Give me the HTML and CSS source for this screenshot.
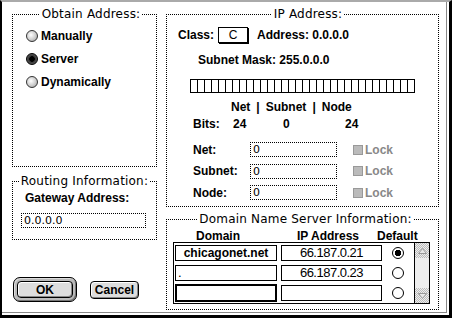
FILE: index.html
```html
<!DOCTYPE html>
<html lang="en">
<head>
    <meta charset="UTF-8">
    <title>TCP/IP</title>
    <link rel="stylesheet" href="styles.css">
</head>
<body>
    <div class="window">
        <!-- coluna esquerda -->
        <div class="col">
            <fieldset class="group obtain">
                <legend>Obtain Address:</legend>
                <div class="radio-row"><span class="radio"></span>Manually</div>
                <div class="radio-row"><span class="radio on"></span>Server</div>
                <div class="radio-row"><span class="radio"></span>Dynamically</div>
            </fieldset>
            <fieldset class="group routing">
                <legend>Routing Information:</legend>
                <div class="label gateway-label">Gateway Address:</div>
                <div class="field gateway-field">0.0.0.0</div>
            </fieldset>
            <div class="buttons">
                <div class="default-ring"><button class="btn ok">OK</button></div>
                <button class="btn cancel">Cancel</button>
            </div>
        </div>

        <!-- coluna direita -->
        <div class="col">
            <fieldset class="group ip">
                <legend>IP Address:</legend>
                <div class="class-row label">
                    <span class="class-label">Class:</span>
                    <span class="class-box">C</span>
                    <span>Address: 0.0.0.0</span>
                </div>
                <div class="label mask">Subnet Mask: 255.0.0.0</div>
                <div class="bitbar"></div>
                <div class="label split">
                    <span>Net</span><span>|</span><span>Subnet</span><span>|</span><span>Node</span>
                </div>
                <div class="label bits">
                    <span class="bits-name">Bits:</span>
                    <span class="bits-net">24</span>
                    <span class="bits-sub">0</span>
                    <span>24</span>
                </div>
                <div class="parts">
                    <div class="part-row">
                        <span class="label">Net:</span>
                        <span class="field">0</span>
                        <span class="check"></span>
                        <span class="label lock">Lock</span>
                    </div>
                    <div class="part-row">
                        <span class="label">Subnet:</span>
                        <span class="field">0</span>
                        <span class="check"></span>
                        <span class="label lock">Lock</span>
                    </div>
                    <div class="part-row">
                        <span class="label">Node:</span>
                        <span class="field">0</span>
                        <span class="check"></span>
                        <span class="label lock">Lock</span>
                    </div>
                </div>
            </fieldset>

            <fieldset class="group dns">
                <legend>Domain Name Server Information:</legend>
                <div class="label dns-head">
                    <span class="head-domain">Domain</span>
                    <span class="head-ip">IP Address</span>
                    <span>Default</span>
                </div>
                <div class="dns-list">
                    <div class="dns-rows">
                        <div class="dns-row">
                            <span class="cell domain bold">chicagonet.net</span>
                            <span class="cell ip-cell">66.187.0.21</span>
                            <span class="dot on"></span>
                        </div>
                        <div class="dns-row">
                            <span class="cell domain left">.</span>
                            <span class="cell ip-cell">66.187.0.23</span>
                            <span class="dot"></span>
                        </div>
                        <div class="dns-row">
                            <span class="cell domain focus"></span>
                            <span class="cell ip-cell"></span>
                            <span class="dot"></span>
                        </div>
                    </div>
                    <div class="scrollbar">
                        <div class="arrow">
                            <svg width="9" height="6" viewBox="0 0 9 6"><polygon points="4.5,0.5 8.5,5.5 0.5,5.5" fill="#e8e8e8" stroke="#999"/></svg>
                        </div>
                        <div class="track"></div>
                        <div class="arrow">
                            <svg width="9" height="6" viewBox="0 0 9 6"><polygon points="0.5,0.5 8.5,0.5 4.5,5.5" fill="#e8e8e8" stroke="#999"/></svg>
                        </div>
                    </div>
                </div>
            </fieldset>
        </div>
    </div>
</body>
</html>
```

FILE: styles.css
```css
* {
    box-sizing: border-box;
}

body {
    margin: 0;
    background: #fff;
    font-family: "Liberation Sans", Arial, sans-serif;
    color: #000;
}

/* moldura da janela */
.window {
    width: 452px;
    height: 318px;
    background: #fff;
    border-top: 2px solid #aaa;
    border-left: 2px solid #000;
    border-right: 3px solid #000;
    border-bottom: 3px solid #000;
    box-shadow: inset -2px -2px 0 #fff, inset -3px -3px 0 #888;
    padding: 5px 0 0 10px;
    display: grid;
    grid-template-columns: 145px 273px;
    column-gap: 9px;
    align-items: start;
}

.col {
    display: flex;
    flex-direction: column;
}

/* grupos com borda pontilhada */
.group {
    margin: 0;
    padding: 0;
    min-width: 0;
    border: 1px dotted #000;
}

.group legend {
    margin: 0 auto;
    padding: 0 2px;
    white-space: nowrap;
    font: 12px/14px "DejaVu Sans", sans-serif;
    letter-spacing: 0.2px;
}

.label {
    font: bold 12px/14px "Liberation Sans", Arial, sans-serif;
}

.field {
    display: block;
    height: 15px;
    border: 1px dotted #000;
    background: #fff;
    padding-left: 2px;
    font: 11px/13px "DejaVu Sans", sans-serif;
}

/* Obtain Address */
.obtain {
    height: 160px;
    padding: 3px 0 0 13px;
}

.radio-row {
    display: flex;
    align-items: center;
    gap: 3px;
    height: 23px;
    font: bold 12px "Liberation Sans", Arial, sans-serif;
}

.radio {
    width: 12px;
    height: 12px;
    border-radius: 50%;
    border: 1px solid #333;
    background: radial-gradient(circle at 40% 40%, #fff 0, #ccc 55%, #999 100%);
}

.radio.on {
    border-color: #000;
    background: radial-gradient(circle, #000 0 2.5px, #333 3px, #777 100%);
}

/* Routing Information */
.routing {
    height: 66px;
    margin-top: 7px;
    padding-top: 3px;
}

.gateway-label {
    margin-left: 12px;
}

.gateway-field {
    margin: 8px 10px 0 8px;
}

/* botões */
.buttons {
    display: flex;
    align-items: center;
    gap: 13px;
    margin-top: 37px;
    padding-left: 1px;
}

.default-ring {
    padding: 3px;
    border: 1px solid #000;
    border-radius: 7px;
    background: #bbb;
    box-shadow: inset 1px 1px 0 #ddd, inset -1px -1px 0 #777;
}

.btn {
    display: block;
    margin: 0;
    padding: 0;
    height: 18px;
    border: 1px solid #000;
    border-radius: 4px;
    background: #ddd;
    box-shadow: inset 1px 1px 0 #fff, inset -1px -1px 0 #888;
    font: bold 12px "Liberation Sans", Arial, sans-serif;
    color: #000;
}

.btn.ok {
    width: 56px;
    height: 17px;
}

.btn.cancel {
    width: 49px;
}

/* IP Address */
.ip {
    height: 200px;
    padding: 5px 0 0 11px;
}

.class-row {
    display: flex;
    align-items: center;
    height: 18px;
}

.class-label {
    width: 40px;
}

.class-box {
    width: 30px;
    height: 16px;
    border: 1px solid #000;
    box-shadow: 1px 1px 0 #000;
    text-align: center;
    font: 12px/14px "Liberation Sans", Arial, sans-serif;
    margin-right: 9px;
}

.mask {
    margin: 9px 0 0 20px;
}

.bitbar {
    width: 225px;
    height: 14px;
    margin: 12px 0 0 12px;
    border-top: 1px solid #000;
    border-bottom: 1px solid #000;
    background: repeating-linear-gradient(to right, #000 0 1px, transparent 1px 7px);
}

.split {
    display: flex;
    gap: 6px;
    margin: 7px 0 0 53px;
}

.bits {
    display: flex;
    margin: 3px 0 0 15px;
}

.bits-name {
    width: 40px;
}

.bits-net {
    width: 50px;
}

.bits-sub {
    width: 62px;
}

.parts {
    margin: 8px 0 0 15px;
    display: grid;
    grid-auto-rows: 21.5px;
}

.part-row {
    display: grid;
    grid-template-columns: 57px 87px 10px auto;
    align-items: center;
}

.part-row .check {
    width: 10px;
    height: 10px;
    margin-left: 16px;
    background: #bbb;
    border: 1px solid #999;
}

.part-row .lock {
    margin-left: 18px;
    color: #888;
}

/* Domain Name Server */
.dns {
    height: 98px;
    margin-top: 5px;
    padding: 5px 0 0 6px;
}

.dns-head {
    display: flex;
    line-height: 11px;
    height: 11px;
    padding-left: 23px;
}

.head-domain {
    width: 101px;
}

.head-ip {
    width: 80px;
}

.dns-list {
    display: flex;
    width: 257px;
    height: 62px;
    border: 1px solid #000;
}

.dns-rows {
    width: 240px;
}

.dns-row {
    display: flex;
    align-items: center;
    height: 20px;
    padding-left: 1px;
}

.cell {
    height: 16px;
    border: 1px solid #000;
    text-align: center;
    font: 13px/14px "Liberation Sans", Arial, sans-serif;
    letter-spacing: -0.5px;
}

.cell.domain {
    width: 102px;
    margin-right: 4px;
}

.cell.ip-cell {
    width: 101px;
}

.cell.bold {
    font: bold 12px/14px "Liberation Sans", Arial, sans-serif;
    letter-spacing: 0;
}

.cell.left {
    text-align: left;
    padding-left: 2px;
}

.cell.focus {
    height: 18px;
    border-width: 2px;
}

.dot {
    width: 12px;
    height: 12px;
    margin-left: 10px;
    border: 1px solid #000;
    border-radius: 50%;
    background: #fff;
}

.dot.on {
    background: radial-gradient(circle, #000 0 3px, #fff 3.5px);
}

.scrollbar {
    width: 15px;
    border-left: 1px solid #000;
    display: flex;
    flex-direction: column;
}

.arrow {
    height: 15px;
    display: flex;
    align-items: center;
    justify-content: center;
    background: repeating-conic-gradient(#bbb 0 25%, #eee 0 50%) 0 0 / 2px 2px;
}

.track {
    flex: 1;
    background: #eee;
}
```
